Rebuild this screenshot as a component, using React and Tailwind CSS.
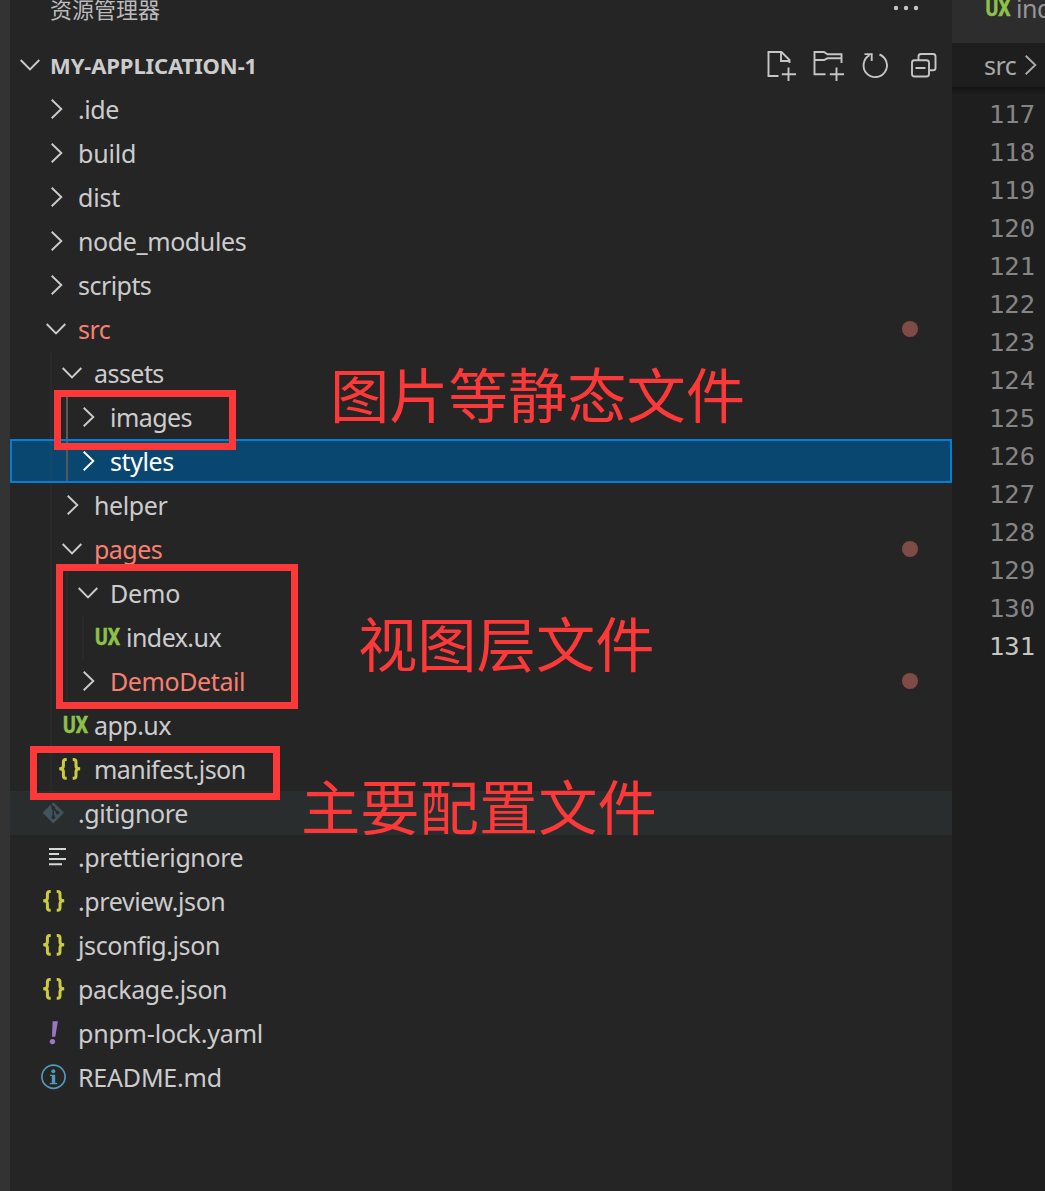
const ICON_BOX = '-ml-2.5 h-11 w-[38px] shrink-0';

const CHEVRON = {
    open: 'M6.7 17 L16 26.3 L25.3 17',
    closed: 'M11.7 12.7 L21.3 22 L11.7 31.3',
};

const TRACKING = {
    normal: 'tracking-[-0.2px]',
    tight: 'tracking-[-0.4px]',
    tighter: 'tracking-[-0.55px]',
};

const ROWS = [
    { name: '.ide', depth: 0, icon: 'closed', tracking: 'tight' },
    { name: 'build', depth: 0, icon: 'closed' },
    { name: 'dist', depth: 0, icon: 'closed' },
    { name: 'node_modules', depth: 0, icon: 'closed', tracking: 'tight' },
    { name: 'scripts', depth: 0, icon: 'closed', tracking: 'tighter' },
    { name: 'src', depth: 0, icon: 'open', error: true, tracking: 'tighter' },
    { name: 'assets', depth: 1, icon: 'open', tracking: 'tighter' },
    { name: 'images', depth: 2, icon: 'closed', activeGuide: true, tracking: 'tighter' },
    { name: 'styles', depth: 2, icon: 'closed', activeGuide: true, selected: true, tracking: 'tight' },
    { name: 'helper', depth: 1, icon: 'closed', tracking: 'tight' },
    { name: 'pages', depth: 1, icon: 'open', error: true, tracking: 'tighter' },
    { name: 'Demo', depth: 2, icon: 'open' },
    { name: 'index.ux', depth: 3, icon: 'ux', tracking: 'tighter' },
    { name: 'DemoDetail', depth: 2, icon: 'closed', error: true, tracking: 'tight' },
    { name: 'app.ux', depth: 1, icon: 'ux', tracking: 'tighter' },
    { name: 'manifest.json', depth: 1, icon: 'json', tracking: 'tighter' },
    { name: '.gitignore', depth: 0, icon: 'git', hovered: true, tracking: 'tight' },
    { name: '.prettierignore', depth: 0, icon: 'text', tracking: 'tight' },
    { name: '.preview.json', depth: 0, icon: 'json', tracking: 'tight' },
    { name: 'jsconfig.json', depth: 0, icon: 'json', tracking: 'tight' },
    { name: 'package.json', depth: 0, icon: 'json', tracking: 'tight' },
    { name: 'pnpm-lock.yaml', depth: 0, icon: 'yaml' },
    { name: 'README.md', depth: 0, icon: 'info' },
];

const LINES = [117, 118, 119, 120, 121, 122, 123, 124, 125, 126, 127, 128, 129, 130, 131];

function UxText({ x, y }) {
    return (
        <text
            x={x}
            y={y}
            fill="#8dc149"
            stroke="#8dc149"
            strokeWidth="0.6"
            fontSize="24"
            fontWeight="700"
            textLength="25"
            lengthAdjust="spacingAndGlyphs"
            className="font-['Roboto',sans-serif]"
        >
            UX
        </text>
    );
}

function RowIcon({ type }) {
    if (type === 'open' || type === 'closed') {
        return (
            <svg viewBox="0 0 38 44" className={ICON_BOX}>
                <path d={CHEVRON[type]} fill="none" stroke="currentColor" strokeWidth="1.9" />
            </svg>
        );
    }
    if (type === 'ux') {
        return (
            <svg viewBox="0 0 38 44" className={ICON_BOX}>
                <UxText x={7} y={30} />
            </svg>
        );
    }
    if (type === 'json') {
        return (
            <svg viewBox="0 0 38 44" className={ICON_BOX}>
                <g fill="none" stroke="#cbcb41" strokeWidth="3">
                    <path d="M10.7 12.4 H9.8 Q7.4 12.4 7.4 15 V19 Q7.4 21.8 3.2 21.8 Q7.4 21.8 7.4 24.6 V28.4 Q7.4 31.2 9.8 31.2 H10.7" />
                    <path d="M16.7 12.4 H17.6 Q20 12.4 20 15 V19 Q20 21.8 24.2 21.8 Q20 21.8 20 24.6 V28.4 Q20 31.2 17.6 31.2 H16.7" />
                </g>
            </svg>
        );
    }
    if (type === 'git') {
        return (
            <svg viewBox="0 0 38 44" className={ICON_BOX}>
                <rect x="5.7" y="14.2" width="15.2" height="15.2" rx="1" fill="#41535b" transform="rotate(45 13.3 21.8)" />
                <g stroke="#2a2d2e" strokeWidth="1.5" fill="#2a2d2e">
                    <path d="M10 12.5 L13.3 16.5 V26.5 M13.3 17 L17.3 21.3" fill="none" />
                    <circle cx="13.3" cy="17" r="1.2" />
                    <circle cx="13.3" cy="26.3" r="1.2" />
                    <circle cx="17.5" cy="21.5" r="1.2" />
                </g>
            </svg>
        );
    }
    if (type === 'text') {
        return (
            <svg viewBox="0 0 38 44" className={ICON_BOX}>
                <path d="M9 14 H26 M9 19 H19 M9 24 H26 M9 29.3 H22" stroke="#d4d7d6" strokeWidth="2" />
            </svg>
        );
    }
    if (type === 'yaml') {
        return (
            <svg viewBox="0 0 38 44" className={ICON_BOX}>
                <path d="M12.6 10.3 H17.9 L15.3 25.7 H12 Z" fill="#a074c4" />
                <circle cx="12.4" cy="30.6" r="2.7" fill="#a074c4" />
            </svg>
        );
    }
    return (
        <svg viewBox="0 0 38 44" className={ICON_BOX}>
            <circle cx="13.5" cy="21.7" r="11.6" fill="none" stroke="#519aba" strokeWidth="1.7" />
            <circle cx="13.3" cy="16.2" r="2" fill="#519aba" />
            <path d="M10 19.7 H15.2 V28 H17.2 V29.3 H9.7 V28 H11.8 V21 H10 Z" fill="#519aba" />
        </svg>
    );
}

function TreeRow({ row }) {
    const color = row.selected ? 'text-white' : row.error ? 'text-[#f88070]' : 'text-[#cccccc]';
    const background = row.selected
        ? 'bg-[#094771] outline-2 -outline-offset-2 outline-[#007fd4]'
        : row.hovered
          ? 'bg-[#2a2d2e]'
          : '';
    const tracking = TRACKING[row.tracking || 'normal'];

    return (
        <div className={`flex h-11 items-center pl-10 ${background}`}>
            {Array.from({ length: row.depth }, (_, i) => (
                <span
                    key={i}
                    className={`h-11 w-4 shrink-0 border-l-2 ${
                        row.activeGuide && i === 1 ? 'border-[#585858]' : 'border-[#585858]/10'
                    }`}
                />
            ))}
            <span className={`flex ${row.selected ? 'text-white' : 'text-[#cccccc]'}`}>
                <RowIcon type={row.icon} />
            </span>
            <span className={`grow text-[25px] leading-[42px] whitespace-nowrap ${tracking} ${color}`}>
                {row.name}
            </span>
            {row.error && <span className="mr-[34px] size-4 rounded-full bg-[#7f4c45]" />}
        </div>
    );
}

function HeaderActions() {
    return (
        <svg viewBox="0 0 180 44" className="h-11 w-[180px]" fill="none" stroke="#c5c5c5" strokeWidth="1.9">
            {/* new file */}
            <path d="M15.5 33 H5.5 V9 H18.5 L26.5 17 V20 M18 9 V18 H26.5 M25.5 24.5 V38 M18.8 31.3 H33" />
            {/* new folder */}
            <path d="M62.5 31.3 H51.5 V9 H61 L64.5 11.3 H78.5 V20 M51.5 17 H61 L64.5 15.3 H78.5 M73.5 24.5 V38 M66.8 31.3 H81" />
            {/* refresh */}
            <path d="M116.5 11.5 A11.7 11.7 0 1 1 106.5 12.2 M101.5 11.1 H108.7 V18" />
            {/* collapse all */}
            <rect x="149" y="17.3" width="17" height="16.2" rx="2.5" />
            <path d="M155.5 17 V13.5 Q155.5 11 158 11 H170 Q172.5 11 172.5 13.5 V25 Q172.5 27.3 170 27.3 H166.5 M152.5 25 H162.5" />
        </svg>
    );
}

function Explorer() {
    return (
        <aside className="relative flex w-[942px] shrink-0 flex-col bg-[#252526]">
            <div className="flex h-[43px] items-start justify-between pr-[33px] pl-10">
                <h2 className="-mt-2 font-['Noto_Sans_CJK_SC',sans-serif] text-[22px] leading-8 text-[#bbbbbb]">
                    资源管理器
                </h2>
                <svg viewBox="0 0 26 16" className="h-4 w-[26px]" fill="#c5c5c5">
                    <circle cx="3" cy="8" r="2.2" />
                    <circle cx="13" cy="8" r="2.2" />
                    <circle cx="23" cy="8" r="2.2" />
                </svg>
            </div>
            <div className="flex h-11 items-center pr-[9px] text-[#cccccc]">
                <svg viewBox="0 0 38 44" className="ml-1 h-11 w-[38px] shrink-0">
                    <path d={CHEVRON.open} fill="none" stroke="currentColor" strokeWidth="1.9" />
                </svg>
                <span className="-ml-0.5 grow text-[22px] font-bold tracking-[-0.12px]">MY-APPLICATION-1</span>
                <HeaderActions />
            </div>
            {ROWS.map((row) => (
                <TreeRow key={row.name} row={row} />
            ))}
        </aside>
    );
}

function Editor() {
    return (
        <main className="min-w-0 grow overflow-hidden bg-[#1e1e1e]">
            <div className="flex h-[43px] bg-[#2d2d2d] pl-8">
                <svg viewBox="0 0 32 43" className="h-[43px] w-8 shrink-0">
                    <UxText x={1.5} y={15.5} />
                </svg>
                <span className="-mt-2 text-[25px] leading-8 tracking-[-0.5px] text-[#969696]">index.ux</span>
            </div>
            <div className="flex h-11 items-center pl-8 text-[25px] text-[#a9a9a9]">
                <span className="pt-0.5 tracking-[-0.5px]">src</span>
                <svg viewBox="0 0 38 44" className="-ml-0.5 h-11 w-[38px] shrink-0">
                    <path d={CHEVRON.closed} fill="none" stroke="currentColor" strokeWidth="1.9" />
                </svg>
            </div>
            <div className="h-2 bg-linear-to-b from-[#141414] to-[#1e1e1e]" />
            <ol className="pl-[37px] font-['DejaVu_Sans_Mono',monospace] text-[25.5px] leading-[38px] text-[#858585]">
                {LINES.map((n) => (
                    <li key={n} className={n === 131 ? 'text-[#c6c6c6]' : ''}>
                        {n}
                    </li>
                ))}
            </ol>
        </main>
    );
}

// Red boxes and captions pinned over the tree
function Annotations() {
    const note = "absolute font-['Noto_Sans_CJK_SC',sans-serif] text-[59.3px] leading-[60px] whitespace-nowrap";
    return (
        <div className="text-[#fd3838]">
            <div className="absolute top-[390px] left-[54px] h-[60px] w-[182px] border-[7px] border-current" />
            <div className="absolute top-[564px] left-[56px] h-[145px] w-[242px] border-[7px] border-current" />
            <div className="absolute top-[746px] left-[30px] h-[54px] w-[250px] border-[7px] border-current" />
            <p className={`${note} top-[362px] left-[330px]`}>图片等静态文件</p>
            <p className={`${note} top-[611px] left-[358px]`}>视图层文件</p>
            <p className={`${note} top-[774px] left-[301px]`}>主要配置文件</p>
        </div>
    );
}

export default function App() {
    return (
        <div className="relative flex h-[1191px] w-[1045px] overflow-hidden bg-[#333333] font-['Noto_Sans',sans-serif]">
            <div className="w-2.5 shrink-0 bg-[#333333]" />
            <Explorer />
            <Editor />
            <Annotations />
        </div>
    );
}
